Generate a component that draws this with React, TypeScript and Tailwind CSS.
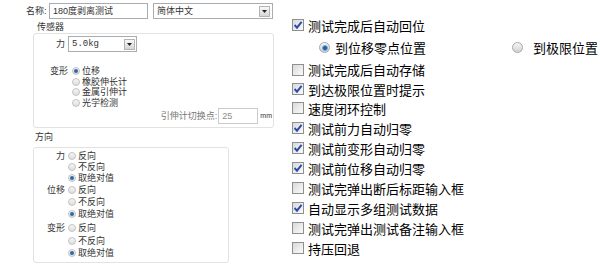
import React from "react";

const CJK = "font-['Noto_Sans_CJK_SC','Noto_Sans',sans-serif]";
const SMALL = "font-['Liberation_Sans','Noto_Sans_CJK_SC',sans-serif]";

function Arrow() {
  return (
    <span className="flex h-[11px] w-[11px] shrink-0 items-center justify-center border border-[#b4b4b4] bg-linear-to-b from-[#f8f8f8] to-[#d6d6d6]">
      <svg width="5" height="3" viewBox="0 0 5 3">
        <path d="M0 0H5L2.5 3Z" fill="#222" />
      </svg>
    </span>
  );
}

function SmallRadio({ checked }: { checked?: boolean }) {
  return (
    <span className="flex h-[8px] w-[8px] shrink-0 items-center justify-center rounded-full border border-[#c2c2c2] bg-linear-to-b from-[#f6f6f6] to-[#dedede]">
      {checked && <span className="h-[4px] w-[4px] rounded-full bg-[#2d69a6]" />}
    </span>
  );
}

function BigRadio({ checked }: { checked?: boolean }) {
  return (
    <span className="flex h-[11px] w-[11px] shrink-0 items-center justify-center rounded-full border border-[#a8a8a8] bg-linear-to-b from-[#f5f5f5] to-[#d2d2d2]">
      {checked && <span className="h-[6px] w-[6px] rounded-full border border-[#7aa8dc] bg-[#1b5fae]" />}
    </span>
  );
}

function Check({ checked }: { checked?: boolean }) {
  return (
    <span className="flex h-[12px] w-[12px] shrink-0 items-center justify-center border border-[#8e8f8f] bg-linear-to-br from-[#d9d9d9] to-[#fbfbfb]">
      {checked && (
        <svg width="10" height="10" viewBox="0 0 10 10">
          <path d="M1.6 5 L4 7.7 L8.6 1.8" fill="none" stroke="#2b4aa6" strokeWidth="1.9" />
        </svg>
      )}
    </span>
  );
}

const OPTIONS: { label: string; checked: boolean; h: string }[] = [
  { label: "测试完成后自动存储", checked: false, h: "h-[21px]" },
  { label: "到达极限位置时提示", checked: true, h: "h-[18px]" },
  { label: "速度闭环控制", checked: false, h: "h-[20px]" },
  { label: "测试前力自动归零", checked: true, h: "h-[20px]" },
  { label: "测试前变形自动归零", checked: true, h: "h-[20px]" },
  { label: "测试前位移自动归零", checked: true, h: "h-[20px]" },
  { label: "测试完弹出断后标距输入框", checked: false, h: "h-[20px]" },
  { label: "自动显示多组测试数据", checked: true, h: "h-[20px]" },
  { label: "测试完弹出测试备注输入框", checked: false, h: "h-[20px]" },
  { label: "持压回退", checked: false, h: "h-[20px]" },
];

const DIRECTIONS = [
  { name: "力", row: "h-[11px] leading-[11px]", gap: "mt-0" },
  { name: "位移", row: "h-[12px] leading-[12px]", gap: "mt-[0.5px]" },
  { name: "变形", row: "h-[12.5px] leading-[12px]", gap: "mt-[2px]" },
];

export default function App() {
  return (
    <div className="flex h-[266px] w-[600px] overflow-hidden bg-white">
      {/* left: name, sensor, direction */}
      <div className={`w-[280px] shrink-0 pl-[26px] pt-[3px] text-[9px] leading-[11px] text-[#333] ${SMALL}`}>
        <div className="flex h-[16px] items-center">
          <span className="w-[23px]">名称:</span>
          <div className="flex h-[16px] w-[99px] items-center border border-[#a7adb5] bg-white pl-[3px]">
            180度剥离测试
          </div>
          <div className="ml-[5px] flex h-[16px] w-[120px] items-center justify-between border border-[#a7adb5] bg-white pl-[3px] pr-[2px]">
            简体中文
            <Arrow />
          </div>
        </div>

        <div className="ml-[11px] mt-[3px] h-[11px]">传感器</div>
        <div className="ml-[7px] h-[95px] w-[241px] rounded-[3px] border border-[#e2e2e2]">
          <div className="mt-[2px] flex items-center">
            <span className="w-[31px] text-right">力</span>
            <div className="ml-[3px] flex h-[16px] w-[69px] items-center justify-between border border-[#a7adb5] bg-white pl-[3px] pr-[1px] font-['Liberation_Mono',monospace]">
              5.0kg
              <Arrow />
            </div>
          </div>
          <div className="mt-[14px] flex leading-[10.5px]">
            <span className="w-[34px] text-right">变形</span>
            <div className="ml-[4px] flex flex-col">
              {["位移", "橡胶伸长计", "金属引伸计", "光学检测"].map((t, i) => (
                <div key={t} className="flex h-[10.5px] items-center gap-[2px]">
                  <SmallRadio checked={i === 0} />
                  {t}
                </div>
              ))}
            </div>
          </div>
          <div className="flex h-[16px] items-center justify-end">
            <span className="text-[#777]">引伸计切换点:</span>
            <div className="ml-[1px] flex h-[16px] w-[40px] items-center border border-[#cbcbcb] pl-[3px] text-[#8a8a8a]">
              25
            </div>
            <span className="ml-[2px] mr-[1px] text-[7px] leading-[8px]">mm</span>
          </div>
        </div>

        <div className="ml-[9px] mt-[4px] h-[11px]">方向</div>
        <div className="ml-[7px] mt-[4px] h-[116px] w-[196px] rounded-[3px] border border-[#e2e2e2] pt-[2.5px]">
          {DIRECTIONS.map((g) => (
            <div key={g.name} className={`flex ${g.gap}`}>
              <span className={`flex w-[31px] items-center justify-end ${g.row}`}>{g.name}</span>
              <div className="ml-[3px] flex flex-col">
                {["反向", "不反向", "取绝对值"].map((t, i) => (
                  <div key={t} className={`flex items-center gap-[2px] ${g.row}`}>
                    <SmallRadio checked={i === 2} />
                    {t}
                  </div>
                ))}
              </div>
            </div>
          ))}
        </div>
      </div>

      {/* right: options */}
      <div className={`flex-1 pt-[14px] text-[13px] leading-none text-black ${CJK}`}>
        <div className="flex h-[22px] items-center gap-[4px] pl-[12px]">
          <Check checked />
          测试完成后自动回位
        </div>
        <div className="flex h-[23px] items-center pl-[39px]">
          <div className="flex w-[193px] items-center gap-[5px]">
            <BigRadio checked />
            到位移零点位置
          </div>
          <div className="flex items-center gap-[10px]">
            <BigRadio />
            到极限位置
          </div>
        </div>
        {OPTIONS.map((o) => (
          <div key={o.label} className={`flex items-center gap-[4px] pl-[12px] ${o.h}`}>
            <Check checked={o.checked} />
            {o.label}
          </div>
        ))}
      </div>
    </div>
  );
}
